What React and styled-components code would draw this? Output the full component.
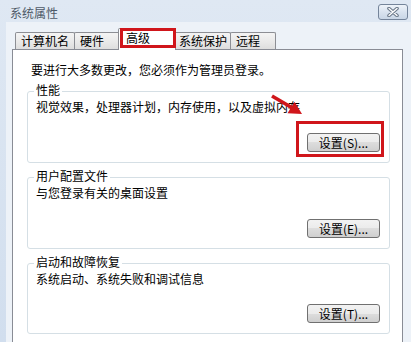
import React from 'react';
import styled, { createGlobalStyle } from 'styled-components';

const GlobalStyle = createGlobalStyle`
  html, body {
    margin: 0;
    padding: 0;
  }
  body {
    width: 411px;
    height: 342px;
    overflow: hidden;
    background: #d3e0f0;
    font-family: "Noto Sans CJK SC", "Noto Sans", sans-serif;
    font-size: 12px;
    color: #000;
  }
`;

const Window = styled.div`
  width: 411px;
  height: 342px;
  display: flex;
  flex-direction: column;
  background: linear-gradient(#dfe8f3, #d1deee);
  overflow: hidden;
`;

const TitleBar = styled.div`
  height: 22px;
  flex: none;
  box-sizing: border-box;
  display: flex;
  align-items: flex-start;
  justify-content: space-between;
  padding: 0 3px 0 10px;
`;

const Title = styled.div`
  margin-top: 6px;
  line-height: 14px;
  color: #4e5967;
`;

const CloseButton = styled.div`
  margin-top: 4px;
  width: 30px;
  height: 16px;
  box-sizing: border-box;
  border: 1px solid #74849a;
  border-radius: 3px;
  background: linear-gradient(#eef3f9, #d9e3ef 50%, #c9d6e6);
  display: flex;
  align-items: center;
  justify-content: center;
`;

const Client = styled.div`
  flex: 1;
  margin-left: 6px;
  background: #edf2f8;
  padding: 6px 8px 0 6px;
  display: flex;
  flex-direction: column;
`;

const TabStrip = styled.div`
  height: 21px;
  flex: none;
  display: flex;
  align-items: flex-end;
  padding-left: 3px;
`;

const Tab = styled.div`
  position: relative;
  box-sizing: border-box;
  width: ${p => p.$w + (p.$active ? 4 : 0)}px;
  height: ${p => (p.$active ? 22 : 17)}px;
  margin: ${p => (p.$active ? '0 -3px -1px -2px' : '0 -1px 0 0')};
  padding-left: ${p => (p.$active ? 7 : 5)}px;
  border: 1px solid #8c8e94;
  border-bottom: none;
  border-radius: 2px 2px 0 0;
  background: ${p => (p.$active ? '#fff' : 'linear-gradient(#f4f4f4, #e9e9e9 55%, #dedede)')};
  line-height: ${p => (p.$active ? 18 : 15)}px;
  white-space: nowrap;
  z-index: ${p => (p.$active ? 2 : 0)};

  ${p => p.$marked && `
    &::after {
      content: '';
      position: absolute;
      left: 1px;
      top: -1px;
      right: -1px;
      bottom: 2px;
      border: 3px solid #d0161b;
    }
  `}
`;

const Panel = styled.div`
  flex: 1;
  position: relative;
  z-index: 1;
  background: #fff;
  border: 1px solid #898c95;
  border-bottom: none;
  padding: 13px 12px 0 14px;
  display: flex;
  flex-direction: column;
  gap: 14px;
`;

const Notice = styled.div`
  margin-left: 4px;
  line-height: 14px;
`;

const Group = styled.div`
  position: relative;
  height: ${p => p.$h}px;
  box-sizing: border-box;
  border: 1px solid #d5dfe5;
  border-radius: 3px;
  padding: 9px 9px 10px 8px;
  display: flex;
  flex-direction: column;
`;

const Legend = styled.div`
  position: absolute;
  top: -8px;
  left: 6px;
  padding: 0 2px;
  background: #fff;
  line-height: 12px;
`;

const Desc = styled.div`
  line-height: 12px;
  white-space: nowrap;
`;

const SetupButton = styled.button`
  position: relative;
  margin-top: auto;
  align-self: flex-end;
  width: 73px;
  height: 19px;
  padding: 0;
  border: 1px solid #707070;
  border-radius: 3px;
  background: linear-gradient(#f2f2f2, #ebebeb 50%, #dddddd 50%, #cfcfcf);
  font-family: "Noto Sans CJK SC", "Noto Sans", sans-serif;
  font-size: 12px;
  line-height: 16px;
  color: #000;

  ${p => p.$marked && `
    &::after {
      content: '';
      position: absolute;
      left: -12px;
      top: -13px;
      right: -5px;
      bottom: -6px;
      border: 3px solid #d0161b;
    }
  `}
`;

const Arrow = styled.svg`
  position: absolute;
  left: 240px;
  top: 0;
  overflow: visible;
`;

const tabs = [
  { label: '计算机名', w: 60 },
  { label: '硬件', w: 47 },
  { label: '高级', w: 54, active: true },
  { label: '系统保护', w: 58 },
  { label: '远程', w: 46 },
];

const groups = [
  { title: '性能', desc: '视觉效果，处理器计划，内存使用，以及虚拟内存', button: '设置(S)...', marked: true, h: 72 },
  { title: '用户配置文件', desc: '与您登录有关的桌面设置', button: '设置(E)...', h: 72 },
  { title: '启动和故障恢复', desc: '系统启动、系统失败和调试信息', button: '设置(T)...', h: 71 },
];

const App = () => (
  <>
    <GlobalStyle />
    <Window>
      <TitleBar>
        <Title>系统属性</Title>
        <CloseButton>
          <svg width="14" height="10" viewBox="0 0 14 10">
            <path d="M3 1.5 L11 8.5 M11 1.5 L3 8.5" stroke="#6a7889" strokeWidth="3.6" strokeLinecap="round" />
            <path d="M3 1.5 L11 8.5 M11 1.5 L3 8.5" stroke="#fff" strokeWidth="1.4" strokeLinecap="round" />
          </svg>
        </CloseButton>
      </TitleBar>
      <Client>
        <TabStrip>
          {tabs.map(t => (
            <Tab key={t.label} $w={t.w} $active={t.active} $marked={t.active}>
              {t.label}
            </Tab>
          ))}
        </TabStrip>
        <Panel>
          <Notice>要进行大多数更改，您必须作为管理员登录。</Notice>
          {groups.map(g => (
            <Group key={g.title} $h={g.h}>
              <Legend>{g.title}</Legend>
              <Desc>{g.desc}</Desc>
              {g.marked && (
                <Arrow width="40" height="28" viewBox="0 0 40 28">
                  <line x1="4" y1="4" x2="24" y2="15.8" stroke="#d0161b" strokeWidth="3.6" />
                  <polygon points="34,22 19.5,21.2 26.5,9.8" fill="#d0161b" />
                </Arrow>
              )}
              <SetupButton $marked={g.marked}>{g.button}</SetupButton>
            </Group>
          ))}
        </Panel>
      </Client>
    </Window>
  </>
);

export default App;
